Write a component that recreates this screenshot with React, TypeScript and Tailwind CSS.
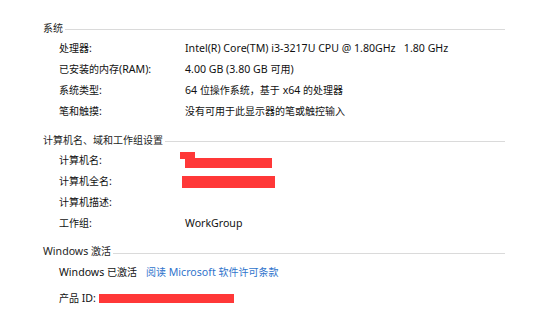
import React from "react";

const font = {
  fontFamily: '"Noto Sans", "Noto Sans CJK SC", sans-serif',
};

// 中文字符按 10px 排，拉丁字符稍大一点，贴近原图的宽度
function T({ text }: { text: string }) {
  const parts = text.split(/([\u3000-\u9fff\uff00-\uffef]+)/).filter(Boolean);
  return (
    <>
      {parts.map((p, i) =>
        /[\u3000-\u9fff\uff00-\uffef]/.test(p) ? (
          <span key={i}>{p}</span>
        ) : (
          <span key={i} className="text-[10.6px] whitespace-pre">
            {p}
          </span>
        )
      )}
    </>
  );
}

function Header({ title }: { title: string }) {
  return (
    <div className="flex items-center h-[20px] pl-[43px] pr-[32px]">
      <span className="text-[#1e1e1e] pr-[2px]">
        <T text={title} />
      </span>
      <div className="flex-1 h-px bg-[#dadada] mt-[3px]" />
    </div>
  );
}

function Row({ label, children }: { label: string; children?: React.ReactNode }) {
  return (
    <div className="flex items-center h-[21px] pl-[59px]">
      <span className="w-[126px] shrink-0">
        <T text={label} />
      </span>
      <div className="relative flex-1 flex items-center h-full">{children}</div>
    </div>
  );
}

export default function App() {
  return (
    <div
      className="w-[537px] h-[320px] bg-white text-[10px] text-[#111] pt-[18px] overflow-hidden"
      style={font}
    >
      <Header title="系统" />
      <Row label="处理器:">
        <T text="Intel(R) Core(TM) i3-3217U CPU @ 1.80GHz   1.80 GHz" />
      </Row>
      <Row label="已安装的内存(RAM):">
        <T text="4.00 GB (3.80 GB 可用)" />
      </Row>
      <Row label="系统类型:">
        <T text="64 位操作系统，基于 x64 的处理器" />
      </Row>
      <Row label="笔和触摸:">
        <T text="没有可用于此显示器的笔或触控输入" />
      </Row>

      <div className="mt-[8px]">
        <Header title="计算机名、域和工作组设置" />
      </div>
      <Row label="计算机名:">
        <div className="absolute left-[-5px] top-[2px] w-[15px] h-[7px] bg-[#ff3838]" />
        <div className="w-[87px] h-[10px] bg-[#ff3838] mt-[4px]" />
      </Row>
      <Row label="计算机全名:">
        <div className="ml-[-3px] w-[93px] h-[12px] bg-[#ff3838]" />
      </Row>
      <Row label="计算机描述:" />
      <Row label="工作组:">
        <T text="WorkGroup" />
      </Row>

      <div className="mt-[8px]">
        <Header title="Windows 激活" />
      </div>
      <div className="flex items-center h-[21px] pl-[59px]">
        <span>
          <T text="Windows 已激活" />
        </span>
        <span className="ml-[9px] text-[#2f74cc]">
          <T text="阅读 Microsoft 软件许可条款" />
        </span>
      </div>
      <div className="flex items-center h-[21px] pl-[59px] mt-[5px]">
        <span>
          <T text="产品 ID:" />
        </span>
        <div className="ml-[3px] w-[135px] h-[9px] bg-[#ff3838]" />
      </div>
    </div>
  );
}
